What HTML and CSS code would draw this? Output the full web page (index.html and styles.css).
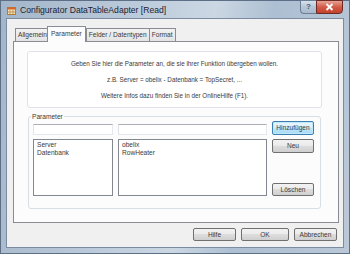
FILE: index.html
```html
<!DOCTYPE html>
<html lang="de">
<head>
    <meta charset="UTF-8">
    <title>Configurator DataTableAdapter</title>
    <link rel="stylesheet" href="styles.css">
</head>
<body>
    <div id="window">
        <div id="titlebar">
            <svg class="app-icon" width="9" height="9" viewBox="0 0 9 9">
                <rect x="0.5" y="1.5" width="8" height="7" fill="#f6e7b8" stroke="#b07a3a"/>
                <rect x="0.5" y="1.5" width="8" height="2" fill="#d9652e"/>
                <path d="M3 4 L3 8.5 M6 4 L6 8.5 M1 6 L8 6" stroke="#b07a3a" stroke-width="0.7"/>
            </svg>
            <span class="title-text">Configurator DataTableAdapter [Read]</span>
            <div class="caption-buttons">
                <div class="cap-help">?</div>
                <div class="cap-close">
                    <svg width="9" height="8" viewBox="0 0 9 8">
                        <path d="M1.5 1 L7.5 7 M7.5 1 L1.5 7" stroke="#fff" stroke-width="1.8"/>
                    </svg>
                </div>
            </div>
        </div>

        <div id="client">
            <div class="tab-row">
                <div class="tab">Allgemein</div>
                <div class="tab tab-active">Parameter</div>
                <div class="tab">Felder / Datentypen</div>
                <div class="tab">Format</div>
            </div>
            <div class="tab-panel">
                <div class="info-box">
                    <p>Geben Sie hier die Parameter an, die sie ihrer Funktion übergeben wollen.</p>
                    <p>z.B. Server = obelix - Datenbank = TopSecret, ...</p>
                    <p>Weitere Infos dazu finden Sie in der OnlineHilfe (F1).</p>
                </div>
                <fieldset class="group-box">
                    <legend>Parameter</legend>
                    <div class="param-grid">
                        <div class="text-input"></div>
                        <div class="text-input"></div>
                        <div class="btn btn-focus">Hinzufügen</div>
                        <div class="list-box">
                            <div>Server</div>
                            <div>Datenbank</div>
                        </div>
                        <div class="list-box">
                            <div>obelix</div>
                            <div>RowHeater</div>
                        </div>
                        <div class="button-column">
                            <div class="btn btn-tall">Neu</div>
                            <div class="btn">Löschen</div>
                        </div>
                    </div>
                </fieldset>
            </div>
            <div class="dialog-buttons">
                <div class="btn btn-dialog">Hilfe</div>
                <div class="btn btn-dialog">OK</div>
                <div class="btn btn-dialog">Abbrechen</div>
            </div>
        </div>
    </div>
</body>
</html>
```

FILE: styles.css
```css
html, body {
    margin: 0;
    padding: 0;
}
body {
    width: 350px;
    height: 254px;
    overflow: hidden;
    font-family: "Liberation Sans", Arial, sans-serif;
    font-size: 6.6px;
    color: #3a3a3a;
}
#window {
    width: 350px;
    height: 254px;
    box-sizing: border-box;
    padding: 0 5px 5px 5px;
    display: flex;
    flex-direction: column;
    background: linear-gradient(100deg, #a3b5c9 0%, #bccbdb 35%, #cbd7e3 55%, #adbfd2 70%, #bac8d7 100%);
    border: 1px solid #5d6f86;
}
#titlebar {
    height: 17px;
    display: flex;
    align-items: center;
    position: relative;
}
.app-icon {
    margin: 1px 4px 0 1px;
}
.title-text {
    font-size: 8.6px;
    color: #1b2331;
    margin-top: 1px;
}
.caption-buttons {
    position: absolute;
    right: 1px;
    top: -1px;
    display: flex;
}
.cap-help {
    width: 16px;
    height: 14px;
    box-sizing: border-box;
    border: 1px solid #6a7d95;
    border-right: none;
    border-radius: 0 0 0 4px;
    background: linear-gradient(#d8e2ec, #b7c6d6 50%, #a9bacd);
    color: #4a5a70;
    font-size: 8px;
    font-weight: bold;
    text-align: center;
    line-height: 12px;
}
.cap-close {
    width: 27px;
    height: 14px;
    box-sizing: border-box;
    border: 1px solid #6e2a24;
    border-radius: 0 0 4px 0;
    background: linear-gradient(#e7a395, #d15c47 50%, #c2412e);
    display: flex;
    align-items: center;
    justify-content: center;
}
#client {
    flex: 1;
    background: #f0f0f0;
    border: 1px solid #7c8ca0;
    display: flex;
    flex-direction: column;
    padding: 8px 5px 0 6px;
}
.tab-row {
    display: flex;
    align-items: flex-end;
    height: 14px;
    padding-left: 2px;
}
.tab {
    height: 12px;
    line-height: 12px;
    padding: 0 2px;
    border: 1px solid #898c95;
    border-bottom: none;
    margin-right: -1px;
    background: linear-gradient(#f2f2f2, #e3e3e3);
}
.tab-active {
    line-height: 13px;
    background: #fcfcfc;
    position: relative;
    z-index: 1;
    margin: 0 -1px -1px -2px;
    padding: 0 3px;
    height: 15px;
}
.tab-active + .tab {
    margin-left: 1px;
}
.tab-panel {
    height: 182px;
    background: #fcfcfc;
    border: 1px solid #898c95;
    padding: 9px 0 0 13px;
    box-sizing: border-box;
    width: 326px;
}
.info-box {
    width: 295px;
    height: 57px;
    box-sizing: border-box;
    background: #fff;
    border: 1px solid #dfe3e8;
    border-radius: 3px;
    text-align: center;
    padding-top: 7px;
    font-size: 6.3px;
}
.info-box p {
    margin: 0 0 6px 0;
    line-height: 10px;
}
.group-box {
    margin: 5px 0 0 1px;
    width: 293px;
    height: 96px;
    box-sizing: border-box;
    border: 1px solid #d5dfe5;
    border-radius: 3px;
    padding: 4px 0 0 4px;
}
.group-box legend {
    padding: 0 1px;
    margin-left: -2px;
}
.param-grid {
    display: grid;
    grid-template-columns: 80px 149px 42px;
    grid-template-rows: 11px 57px;
    column-gap: 5px;
    row-gap: 4px;
}
.text-input,
.list-box {
    background: #fff;
    border: 1px solid #abadb3;
    box-sizing: border-box;
}
.text-input {
    border-color: #abadb3 #e3e9ef #e3e9ef #e2e3ea;
}
.list-box {
    border-color: #828790;
    padding: 1px 0 0 3px;
    line-height: 8px;
}
.button-column {
    display: flex;
    flex-direction: column;
    justify-content: space-between;
}
.btn {
    height: 13px;
    box-sizing: border-box;
    border: 1px solid #707070;
    border-radius: 2px;
    background: linear-gradient(#f2f2f2 0%, #ebebeb 45%, #dddddd 50%, #cfcfcf 100%);
    text-align: center;
    line-height: 11px;
}
.btn-focus {
    height: 14px;
    margin-top: -3px;
    border-color: #3c7fb1;
    background: linear-gradient(#eaf6fd 0%, #d9f0fc 45%, #bee6fd 50%, #a7d9f5 100%);
    box-shadow: inset 0 0 0 1px #bfe8fd;
    line-height: 12px;
}
.btn-tall {
    height: 14px;
    line-height: 12px;
}
.dialog-buttons {
    display: flex;
    justify-content: flex-end;
    gap: 5px;
    padding: 5px 1px 0 0;
}
.btn-dialog {
    width: 43px;
    height: 13px;
}
.dialog-buttons .btn-dialog:nth-child(2) {
    width: 48px;
}
```
